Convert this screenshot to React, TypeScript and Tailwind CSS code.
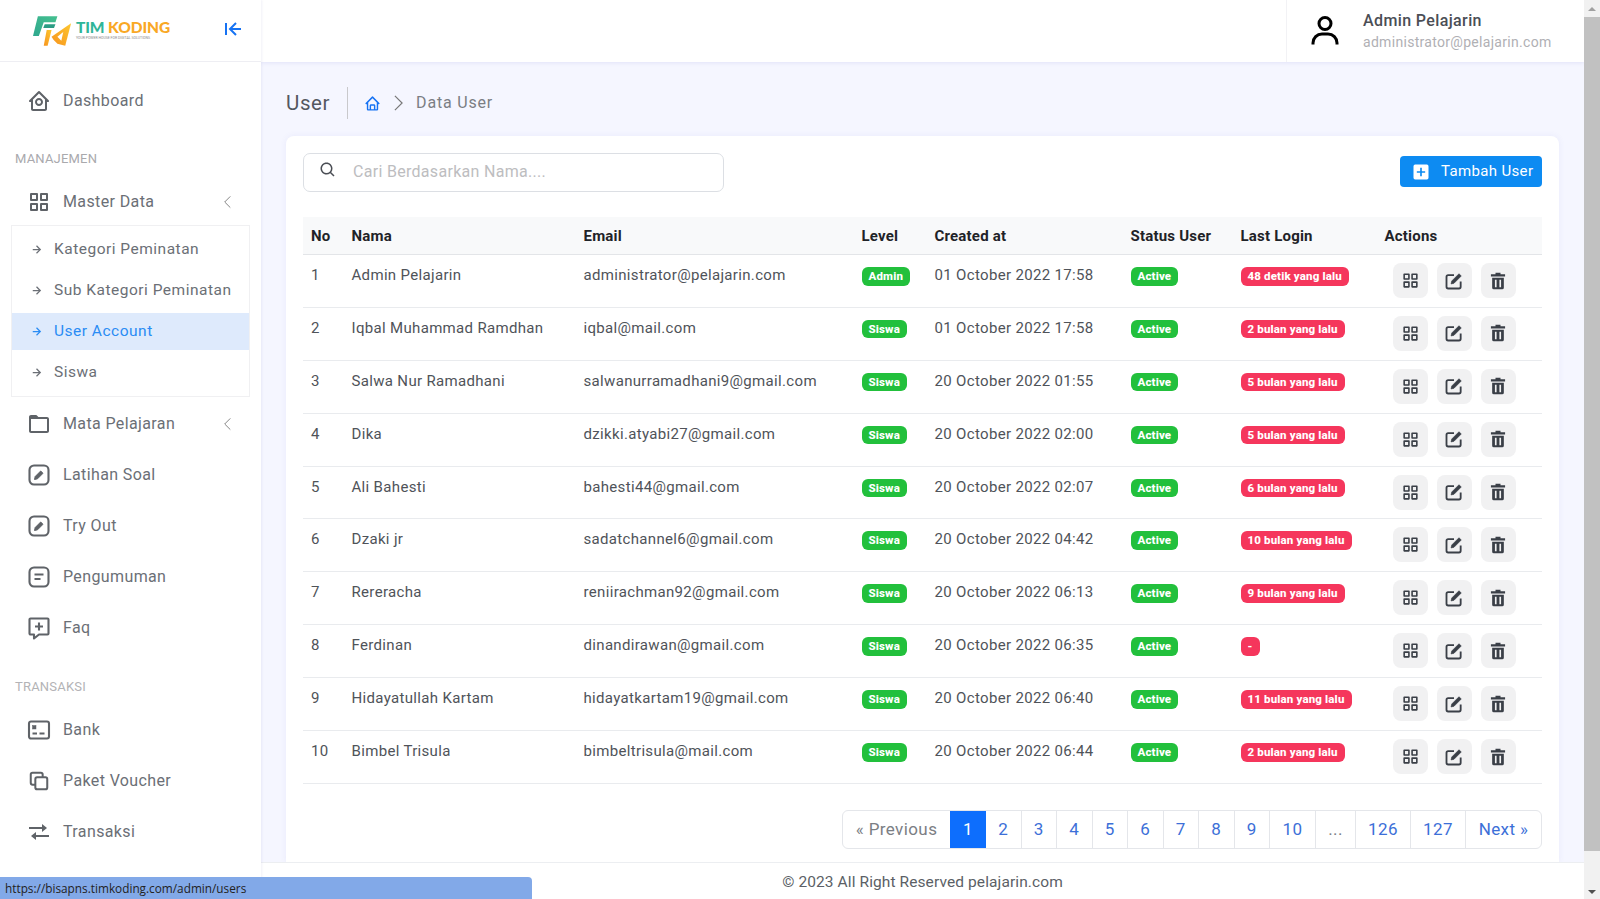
import React from "react";
import { BiHomeCircle, BiGridAlt, BiFolder, BiTransfer, BiUser, BiArrowToLeft, BiHome, BiSearch, BiSolidPlusSquare, BiRightArrowAlt } from "react-icons/bi";

const font = { fontFamily: "Roboto, sans-serif" };

function SquareEdit() {
  return (
    <svg viewBox="0 0 24 24" className="w-6 h-6" fill="none" stroke="currentColor" strokeWidth="2.100">
      <rect x="2.500" y="2.500" width="19" height="19" rx="4.500" />
      <path d="M7.500 16.500l.7-3 5.500-5.500 2.300 2.300-5.500 5.500z" fill="currentColor" strokeWidth="1" strokeLinejoin="round" />
    </svg>
  );
}
function NoteIcon() {
  return (
    <svg viewBox="0 0 24 24" className="w-6 h-6" fill="none" stroke="currentColor" strokeWidth="2.100">
      <rect x="2.500" y="2.500" width="19" height="19" rx="4.500" />
      <path d="M7.500 9.500h9M7.500 14h6" />
    </svg>
  );
}
function FaqIcon() {
  return (
    <svg viewBox="0 0 24 24" className="w-6 h-6" fill="none" stroke="currentColor" strokeWidth="2.100" strokeLinejoin="round">
      <path d="M3.500 2.500h17a1 1 0 0 1 1 1v14a1 1 0 0 1-1 1H12l-5 4v-4H3.500a1 1 0 0 1-1-1v-14a1 1 0 0 1 1-1z" />
      <path d="M12 6.500v8M8 10.500h8" />
    </svg>
  );
}
function CardIcon() {
  return (
    <svg viewBox="0 0 24 24" className="w-6 h-6" fill="none" stroke="currentColor" strokeWidth="2.100">
      <rect x="2" y="3.500" width="20" height="17" rx="2" />
      <rect x="5.500" y="7.500" width="3.500" height="3.500" fill="currentColor" strokeWidth="0.500" />
      <path d="M5.500 15.500h4.500M12.500 15.500h5" />
    </svg>
  );
}
function CopyIcon() {
  return (
    <svg viewBox="0 0 24 24" className="w-[22px] h-[22px]" fill="none" stroke="currentColor" strokeWidth="2.200">
      <path d="M16 8V5a2 2 0 0 0-2-2H5a2 2 0 0 0-2 2v9a2 2 0 0 0 2 2h3" />
      <rect x="8" y="8" width="13" height="13" rx="2" />
    </svg>
  );
}
function ThinChevron({ dir, className }: { dir: "left" | "right"; className: string }) {
  return (
    <svg viewBox="0 0 12 20" className={className} fill="none" stroke="currentColor" strokeWidth="1.300">
      <path d={dir === "left" ? "M10 2L2 10l8 8" : "M2 2l8 8-8 8"} />
    </svg>
  );
}
function EditIcon() {
  return (
    <svg viewBox="0 0 24 24" className="w-[20px] h-[20px]" fill="none" stroke="currentColor" strokeWidth="2.200">
      <path d="M20 12.500V19a2 2 0 0 1-2 2H5a2 2 0 0 1-2-2V7a2 2 0 0 1 2-2h7" />
      <path d="M8.500 15.500l.8-3.500L18 3.300 20.700 6 12 14.700z" fill="currentColor" strokeWidth="0.800" strokeLinejoin="round" />
    </svg>
  );
}
function TrashIcon() {
  return (
    <svg viewBox="0 0 24 24" className="w-[20px] h-[20px]" fill="currentColor">
      <path d="M9 2h6v2h5.500v2.500h-17V4H9z" />
      <path fillRule="evenodd" d="M5 8h14v12a2 2 0 0 1-2 2H7a2 2 0 0 1-2-2zm3.300 2.500v9h2v-9zm5.400 0v9h2v-9z" />
    </svg>
  );
}
function Logo() {
  return (
    <div className="flex items-center">
      <svg viewBox="0 0 42 32" className="w-[41px] h-[32px] shrink-0">
        <defs>
          <linearGradient id="lt" x1="0" y1="1" x2="1" y2="0">
            <stop offset="0" stopColor="#2fa88e" />
            <stop offset="1" stopColor="#45c08f" />
          </linearGradient>
          <linearGradient id="lo" x1="0" y1="1" x2="1" y2="0">
            <stop offset="0" stopColor="#f7931e" />
            <stop offset="1" stopColor="#fdc830" />
          </linearGradient>
        </defs>
        <path d="M5 1h20l-2 6H11L6 21H0z" fill="url(#lt)" />
        <path d="M12 9h11l-1.500 4H10.500z" fill="#2a9c84" />
        <path d="M14 15h5l-4 16h-4z" fill="url(#lo)" />
        <path d="M19 22l20-14-6 23-8-2-4-4z" fill="url(#lo)" />
        <path d="M25 22l6-5-2 9z" fill="#fff" />
      </svg>
      <div className="ml-[2px] flex flex-col -mt-[2px]">
        <div className="text-[15.500px] leading-[17px] font-black tracking-[-0.1px] whitespace-nowrap" style={{ fontFamily: "Lato, sans-serif" }}>
          <span className="text-[#2fb598]">TIM </span>
          <span className="text-[#f9a825]">KODING</span>
        </div>
        <div className="text-[3.500px] leading-[4px] text-[#8a8a8a] whitespace-nowrap">YOUR POWER HOUSE FOR DIGITAL SOLUTIONS</div>
      </div>
    </div>
  );
}

function NavItem({ icon, label, chevron, className = "" }: { icon: React.ReactNode; label: string; chevron?: boolean; className?: string }) {
  return (
    <div className={`flex items-center pl-[27px] pr-[29px] h-[51px] text-[#6b6f76] ${className}`}>
      <span className="w-[24px] h-[24px] flex items-center justify-center text-[#5f6368] text-[24px]">{icon}</span>
      <span className="ml-[12px] text-[16px] tracking-[0.38px]">{label}</span>
      {chevron && <ThinChevron dir="left" className="ml-auto text-[#777] w-[9px] h-[14px]" />}
    </div>
  );
}
function SubItem({ label, active }: { label: string; active?: boolean }) {
  return (
    <div className={`flex items-center h-[37px] pl-[17px] text-[15.500px] tracking-[0.5px] ${active ? "bg-[#deeafc] text-[#2a8cf4]" : "text-[#6b6f76]"}`}>
      <BiRightArrowAlt className="w-[15px] h-[15px] mr-[10px]" />
      {label}
    </div>
  );
}

const rows = [
  [1, "Admin Pelajarin", "administrator@pelajarin.com", "Admin", "01 October 2022 17:58", "48 detik yang lalu"],
  [2, "Iqbal Muhammad Ramdhan", "iqbal@mail.com", "Siswa", "01 October 2022 17:58", "2 bulan yang lalu"],
  [3, "Salwa Nur Ramadhani", "salwanurramadhani9@gmail.com", "Siswa", "20 October 2022 01:55", "5 bulan yang lalu"],
  [4, "Dika", "dzikki.atyabi27@gmail.com", "Siswa", "20 October 2022 02:00", "5 bulan yang lalu"],
  [5, "Ali Bahesti", "bahesti44@gmail.com", "Siswa", "20 October 2022 02:07", "6 bulan yang lalu"],
  [6, "Dzaki jr", "sadatchannel6@gmail.com", "Siswa", "20 October 2022 04:42", "10 bulan yang lalu"],
  [7, "Rereracha", "reniirachman92@gmail.com", "Siswa", "20 October 2022 06:13", "9 bulan yang lalu"],
  [8, "Ferdinan", "dinandirawan@gmail.com", "Siswa", "20 October 2022 06:35", "-"],
  [9, "Hidayatullah Kartam", "hidayatkartam19@gmail.com", "Siswa", "20 October 2022 06:40", "11 bulan yang lalu"],
  [10, "Bimbel Trisula", "bimbeltrisula@mail.com", "Siswa", "20 October 2022 06:44", "2 bulan yang lalu"],
] as const;

const colGrid = "grid grid-cols-[40.500px_232px_278px_73px_196px_110px_144px_1fr]";

function Badge({ text, color }: { text: string; color: string }) {
  return <span className={`inline-block h-[18.500px] leading-[18px] px-[7px] rounded-[6px] text-white text-[11.500px] font-extrabold tracking-[0.15px] whitespace-nowrap ${color}`}>{text}</span>;
}
function ActionBtn({ children }: { children: React.ReactNode }) {
  return <span className="w-[35px] h-[35px] rounded-[8px] bg-[#f1f1f2] flex items-center justify-center text-[#3a3f47]">{children}</span>;
}

const pages = ["2", "3", "4", "5", "6", "7", "8", "9", "10"];

export default function App() {
  return (
    <div className="relative w-[1600px] h-[899px] overflow-hidden flex bg-[#f5f6ff]" style={font}>
      <aside className="w-[261px] shrink-0 bg-white shadow-[1px_0_2px_rgba(80,80,160,0.08)] z-10 flex flex-col">
        <div className="h-[62px] flex items-center justify-between pl-[33px] pr-[16px] border-b border-[#eeeef3] shrink-0">
          <Logo />
          <BiArrowToLeft className="w-[24px] h-[24px] text-[#1672f3] -mt-[4px]" />
        </div>
        <NavItem icon={<BiHomeCircle className="w-[24px] h-[24px]" />} label="Dashboard" className="mt-[13px]" />
        <div className="mt-[25px] pl-[15px] text-[13px] leading-[16px] tracking-[0.2px] text-[#a9a9ad]">MANAJEMEN</div>
        <NavItem icon={<BiGridAlt className="w-[24px] h-[24px]" />} label="Master Data" chevron className="mt-[9px] h-[50px]" />
        <div className="mx-[11px] -mt-[2px] border border-[#f0f0f2] py-[5px] flex flex-col gap-[4px]">
          <SubItem label="Kategori Peminatan" />
          <SubItem label="Sub Kategori Peminatan" />
          <SubItem label="User Account" active />
          <SubItem label="Siswa" />
        </div>
        <NavItem icon={<BiFolder className="w-[24px] h-[24px]" />} label="Mata Pelajaran" chevron className="mt-[1px]" />
        <NavItem icon={<SquareEdit />} label="Latihan Soal" />
        <NavItem icon={<SquareEdit />} label="Try Out" />
        <NavItem icon={<NoteIcon />} label="Pengumuman" />
        <NavItem icon={<FaqIcon />} label="Faq" />
        <div className="mt-[26px] pl-[15px] text-[13px] leading-[16px] tracking-[0.2px] text-[#b3b3b6]">TRANSAKSI</div>
        <NavItem icon={<CardIcon />} label="Bank" className="mt-[9px]" />
        <NavItem icon={<CopyIcon />} label="Paket Voucher" />
        <NavItem icon={<BiTransfer className="w-[24px] h-[24px]" />} label="Transaksi" />
      </aside>

      <div className="flex-1 min-w-0 flex flex-col">
        <header className="h-[62px] bg-white shrink-0 shadow-[0_1px_4px_rgba(90,90,200,0.12)] flex justify-end">
          <div className="w-[298px] border-l border-[#f2f2f5] flex items-center pl-[20px]">
            <BiUser className="w-[36px] h-[36px] text-black" />
            <div className="ml-[20px]">
              <div className="text-[16px] leading-[22px] tracking-[0.38px] font-medium text-[#4b4e55]">Admin Pelajarin</div>
              <div className="text-[14px] leading-[20px] tracking-[0.3px] text-[#b0b0b4]">administrator@pelajarin.com</div>
            </div>
          </div>
        </header>

        <main className="flex-1 min-h-0 px-[25px] flex flex-col">
          <div className="h-[74px] pt-[8px] flex items-center shrink-0">
            <span className="text-[20.500px] tracking-[0.6px] text-[#54585f]">User</span>
            <span className="w-px h-[32px] bg-[#c9c9cc] ml-[17px] mr-[16px]" />
            <BiHome className="w-[17px] h-[17px] text-[#1672f3]" />
            <ThinChevron dir="right" className="w-[11px] h-[18px] ml-[12px] text-[#777]" />
            <span className="ml-[12px] text-[16px] tracking-[0.8px] text-[#7b7e84]">Data User</span>
          </div>

          <section className="flex-1 min-h-0 bg-white rounded-t-[8px] shadow-[0_0_6px_rgba(90,90,200,0.08)] px-[17px] pt-[17px] flex flex-col">
            <div className="flex items-center justify-between h-[38px] shrink-0">
              <div className="w-[421px] h-[39px] border border-[#dcdfe4] rounded-[7px] flex items-center pl-[15px]">
                <BiSearch className="w-[18px] h-[18px] text-[#4b4e55] -mt-[4px]" />
                <span className="ml-[16px] text-[16px] tracking-[0.3px] text-[#bdbdc0]">Cari Berdasarkan Nama....</span>
              </div>
              <button className="w-[142px] h-[31px] -mt-[1px] bg-[#0d8bf2] rounded-[4px] text-white flex items-center pl-[11px] text-[15px] tracking-[0.35px]">
                <BiSolidPlusSquare className="w-[20px] h-[20px]" />
                <span className="ml-[10px]">Tambah User</span>
              </button>
            </div>

            <div className="mt-[26px] shrink-0 text-[#4b4e55]">
              <div className={`${colGrid} h-[38px] pt-[2px] items-center bg-[#f8f9fa] border-b border-[#e3e5e8] font-bold text-[15px] tracking-[0.2px] text-[#1f2328]`}>
                <div className="pl-[8px]">No</div>
                <div className="pl-[8px]">Nama</div>
                <div className="pl-[8px]">Email</div>
                <div className="pl-[8px]">Level</div>
                <div className="pl-[8px]">Created at</div>
                <div className="pl-[8px]">Status User</div>
                <div className="pl-[8px]">Last Login</div>
                <div className="pl-[8px]">Actions</div>
              </div>
              {rows.map((r) => (
                <div key={r[0]} className={`${colGrid} h-[52.900px] border-b border-[#e9ebee] text-[15px] tracking-[0.33px] text-[#4f5359]`}>
                  <div className="pl-[8px] pt-[9px]">{r[0]}</div>
                  <div className="pl-[8px] pt-[9px]">{r[1]}</div>
                  <div className="pl-[8px] pt-[9px]">{r[2]}</div>
                  <div className="pl-[8px] pt-[9px]"><Badge text={r[3]} color="bg-[#22c03c]" /></div>
                  <div className="pl-[8px] pt-[9px]">{r[4]}</div>
                  <div className="pl-[8px] pt-[9px]"><Badge text="Active" color="bg-[#22c03c]" /></div>
                  <div className="pl-[8px] pt-[9px]"><Badge text={r[5]} color="bg-[#f5365c]" /></div>
                  <div className="pl-[16px] pt-[8px] flex gap-[9px]">
                    <ActionBtn><BiGridAlt className="w-[19px] h-[19px]" /></ActionBtn>
                    <ActionBtn><EditIcon /></ActionBtn>
                    <ActionBtn><TrashIcon /></ActionBtn>
                  </div>
                </div>
              ))}
            </div>

            <div className="mt-[26px] shrink-0 flex justify-end">
              <div className="h-[39px] flex border border-[#e4e6ea] rounded-[6px] text-[17px] tracking-[0.4px] overflow-hidden">
                <span className="w-[107px] flex items-center justify-center text-[#7b7e84]">« Previous</span>
                <span className="w-[36px] flex items-center justify-center bg-[#0d6efd] text-white">1</span>
                {pages.map((p) => (
                  <span key={p} className={`${p === "10" ? "w-[46px]" : "w-[35.500px]"} flex items-center justify-center border-r border-[#e4e6ea] text-[#3c6fd8]`}>{p}</span>
                ))}
                <span className="w-[40px] flex items-center justify-center border-r border-[#e4e6ea] text-[#7b7e84]">...</span>
                <span className="w-[55px] flex items-center justify-center border-r border-[#e4e6ea] text-[#3c6fd8]">126</span>
                <span className="w-[55px] flex items-center justify-center border-r border-[#e4e6ea] text-[#3c6fd8]">127</span>
                <span className="w-[75px] flex items-center justify-center text-[#3c6fd8]">Next »</span>
              </div>
            </div>
          </section>
        </main>

        <footer className="h-[37px] shrink-0 bg-white border-t border-[#eceef1] flex items-center justify-center text-[15.500px] tracking-[0.1px] text-[#5b5f66] pt-[4px]">
          © 2023 All Right Reserved pelajarin.com
        </footer>
      </div>

      <div className="w-[16px] shrink-0 bg-[#f1f1f1] flex flex-col items-center z-10">
        <div className="h-[17px] w-full flex items-center justify-center">
          <span className="w-0 h-0 border-x-[4px] border-x-transparent border-b-[4px] border-b-[#a0a0a0]" />
        </div>
        <div className="w-full h-[834px] bg-[#c1c1c1]" />
        <div className="flex-1 w-full flex items-end justify-center pb-[5px]">
          <span className="w-0 h-0 border-x-[4px] border-x-transparent border-t-[4px] border-t-[#505050]" />
        </div>
      </div>

      <div className="absolute left-0 bottom-0 w-[532px] h-[22px] bg-[#82a9e8] rounded-tr-[4px] z-20 flex items-center pl-[5px] pt-[1px] text-[11.800px] text-[#222]" style={{ fontFamily: "'Open Sans', sans-serif" }}>
        https://bisapns.timkoding.com/admin/users
      </div>
    </div>
  );
}
